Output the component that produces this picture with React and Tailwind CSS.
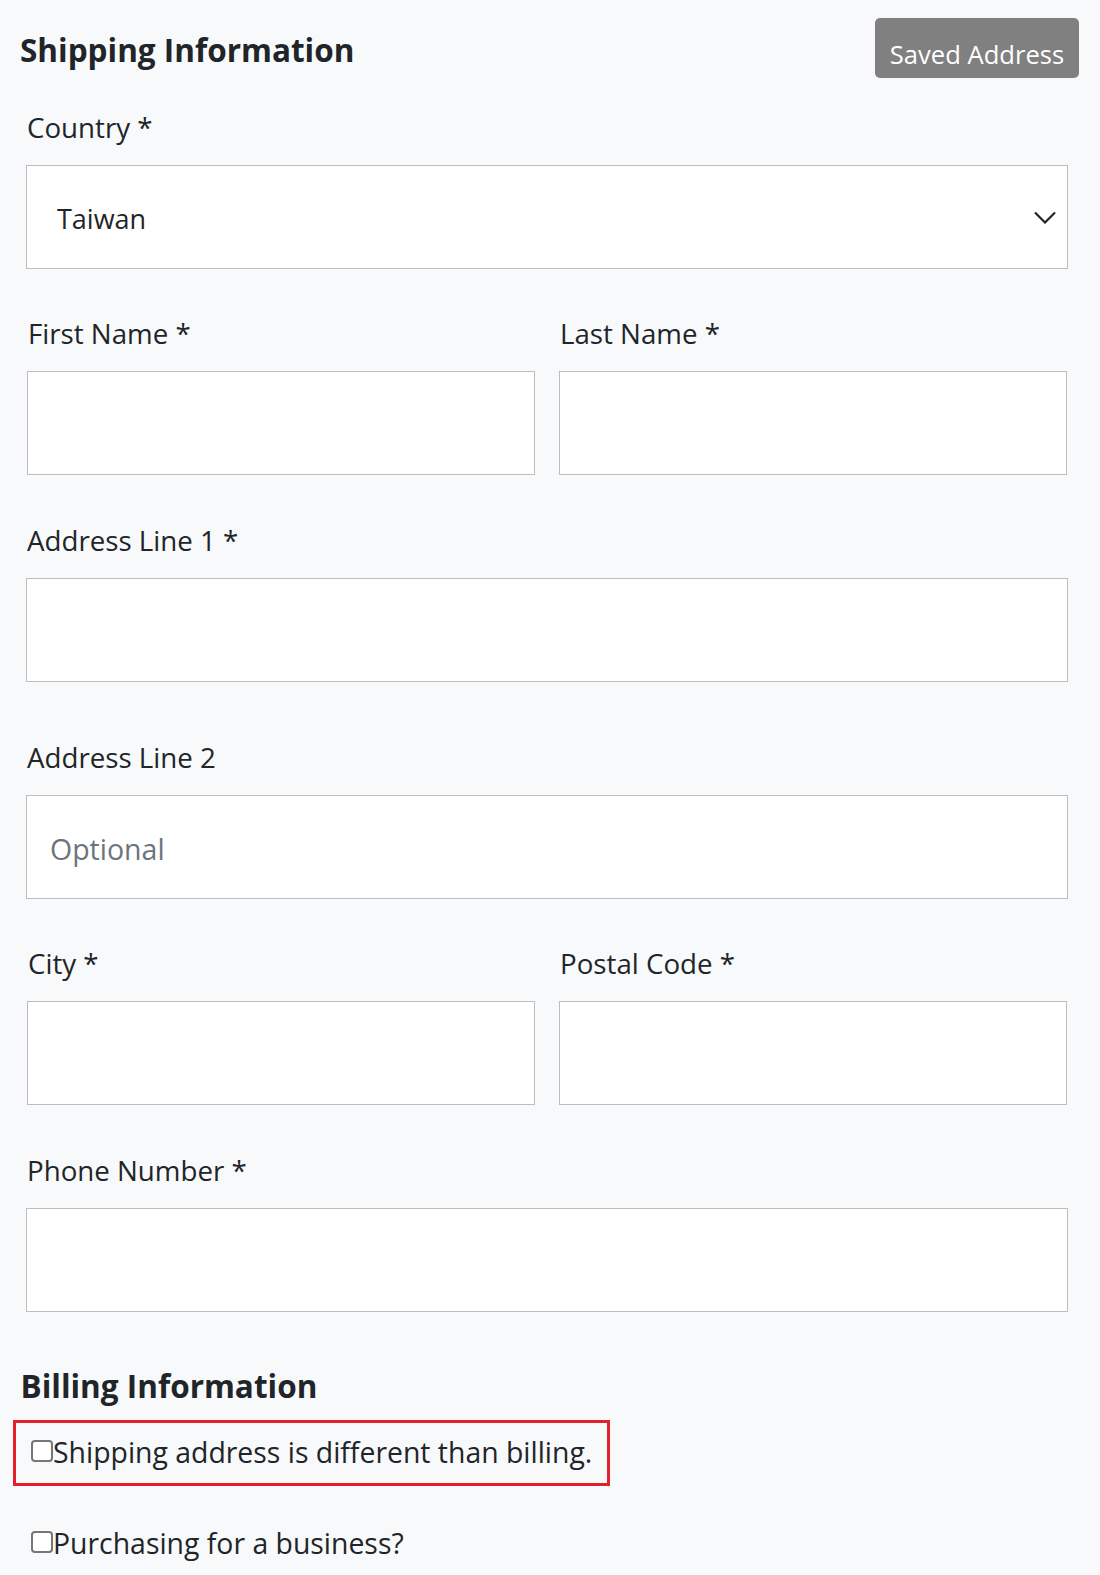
import React from 'react'

const labelCls = 'block pl-[1px] text-[27.7px] leading-[40px] mb-[18px]'
const inputCls =
  'block w-full h-[104px] bg-white border border-[#bdbdbd] px-[23px] pt-[4px] text-[28.5px] text-[#212529] outline-none placeholder:text-[#6c757d]'

function Field({ label, placeholder, className = '' }) {
  return (
    <div className={className}>
      <label className={labelCls}>{label}</label>
      <input type="text" className={inputCls} placeholder={placeholder} />
    </div>
  )
}

function Check({ label, className = '' }) {
  return (
    <label className={'flex items-start ' + className}>
      <input
        type="checkbox"
        className="appearance-none shrink-0 w-[22px] h-[22px] mt-[8px] bg-white border-2 border-[#767676] rounded-[4px]"
      />
      <span className="text-[28.4px] leading-[40px]">{label}</span>
    </label>
  )
}

export default function App() {
  return (
    <div className="w-[1100px] min-h-screen bg-[#f8f9fa] text-[#212529] font-['Open_Sans',sans-serif] pb-[13px]">
      <div className="flex justify-between items-start pl-[20px] pr-[21px] pt-[18px]">
        <h2 className="mt-[10.5px] text-[31.5px] font-bold leading-[42px]">Shipping Information</h2>
        <button className="flex items-start justify-center w-[204px] h-[60px] pt-[18.5px] rounded-[5px] bg-[#808080] text-white text-[25.6px] leading-[36px]">
          Saved Address
        </button>
      </div>

      <div className="mt-[28.5px] ml-[26px] w-[1042px]">
        <div>
          <label className={labelCls}>Country *</label>
          <div className="relative">
            <select className="appearance-none block w-full h-[104px] bg-white border border-[#bdbdbd] pl-[30px] pt-[6px] text-[27px] text-[#212529] outline-none">
              <option>Taiwan</option>
            </select>
            <svg
              className="absolute right-[12px] top-[46px] pointer-events-none"
              width="22"
              height="13"
              viewBox="0 0 22 13"
              fill="none"
              stroke="#212529"
              strokeWidth="2.2"
            >
              <path d="M1 1.5l10 10 10-10" />
            </svg>
          </div>
        </div>

        <div className="grid grid-cols-2 gap-x-[24px] mx-[1px] mt-[44.5px]">
          <Field label="First Name *" />
          <Field label="Last Name *" />
        </div>

        <Field label="Address Line 1 *" className="mt-[44.5px]" />
        <Field label="Address Line 2" placeholder="Optional" className="mt-[55px]" />

        <div className="grid grid-cols-2 gap-x-[24px] mx-[1px] mt-[44.5px]">
          <Field label="City *" />
          <Field label="Postal Code *" />
        </div>

        <Field label="Phone Number *" className="mt-[44.5px]" />
      </div>

      <h2 className="mt-[53px] pl-[20.5px] text-[31.5px] font-bold leading-[42px]">Billing Information</h2>

      <div className="mt-[13px] ml-[13px] inline-flex border-[3px] border-[#e3202c] pl-[15px] pr-[15px] pt-[9px] pb-[11px]">
        <Check label="Shipping address is different than billing." />
      </div>

      <Check label="Purchasing for a business?" className="mt-[37px] pl-[31px]" />
    </div>
  )
}
